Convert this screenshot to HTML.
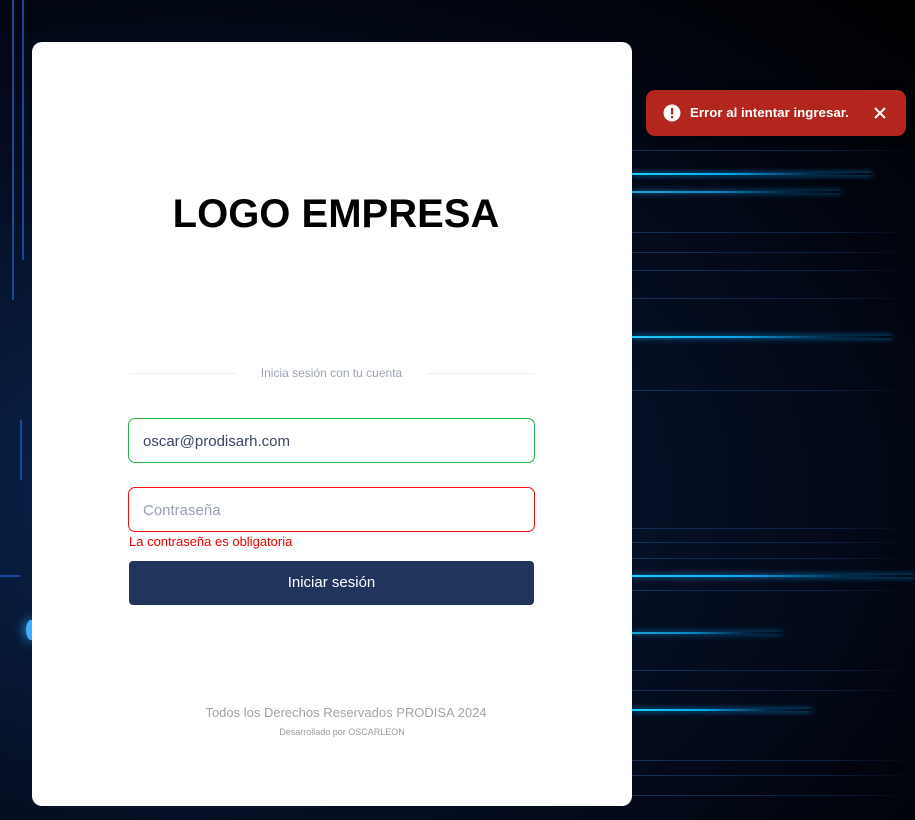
<!DOCTYPE html>
<html><head><meta charset="utf-8"><style>
*{margin:0;padding:0;box-sizing:border-box}
body{width:915px;height:820px;overflow:hidden;position:relative;font-family:"Liberation Sans",sans-serif;background:radial-gradient(ellipse at 20% 60%,#0a2550 0%,#06122a 40%,#020510 75%,#000 100%)}
.ln{position:absolute;left:632px;height:2px;background:linear-gradient(90deg,#1ad0ff,#0aa8ee 40%,rgba(10,120,200,.3) 75%,transparent);box-shadow:0 0 6px #0af}
.dl{position:absolute;left:632px;right:0;height:1px;background:linear-gradient(90deg,#16305a,#0c2040 70%,transparent)}
.cl{position:absolute;border:2px solid #1c57b5;opacity:.8}
.card{position:absolute;left:32px;top:42px;width:600px;height:764px;background:#fff;border-radius:10px}
.logo{position:absolute;top:152px;left:0;width:100%;text-align:center;font-size:40px;line-height:40px;font-weight:bold;color:#000;padding-left:8px}
.div{position:absolute;top:324px;left:97px;width:405px;font-size:12px;color:#9aa3b5;text-align:center}
.div:before,.div:after{content:"";position:absolute;top:7px;width:107px;height:1px;background:#eceef2}
.div:before{left:0}.div:after{right:0}
.inp{position:absolute;left:96px;width:407px;height:45px;border-radius:7px;font-size:15px;padding:14px 14px}
.btn{position:absolute;left:97px;top:519px;width:405px;height:44px;background:#21345c;border-radius:4px;color:#fff;text-align:center;line-height:44px;font-size:15px}
.toast{position:absolute;left:646px;top:90px;width:260px;height:46px;background:#b3261e;border-radius:9px;box-shadow:0 2px 8px rgba(0,0,0,.6);color:#fff;font-size:13.3px;font-weight:bold}
</style></head><body>
<div class="dl" style="top:150px"></div><div class="dl" style="top:232px"></div><div class="dl" style="top:252px"></div><div class="dl" style="top:270px"></div><div class="dl" style="top:298px"></div><div class="dl" style="top:390px"></div><div class="dl" style="top:528px"></div><div class="dl" style="top:542px"></div><div class="dl" style="top:558px"></div><div class="dl" style="top:590px"></div><div class="dl" style="top:670px"></div><div class="dl" style="top:690px"></div><div class="dl" style="top:760px"></div><div class="dl" style="top:775px"></div><div class="dl" style="top:795px"></div>
<div class="ln" style="top:173px;width:240px"></div>
<div class="ln" style="top:191px;width:210px;opacity:.8"></div>
<div class="ln" style="top:336px;width:260px"></div>
<div class="ln" style="top:575px;width:283px"></div>
<div class="ln" style="top:632px;width:150px;opacity:.8"></div>
<div class="ln" style="top:709px;width:180px"></div>
<div class="cl" style="left:12px;top:0;width:2px;height:300px;border-width:0 0 0 2px"></div>
<div class="cl" style="left:22px;top:0;width:2px;height:260px;border-width:0 0 0 2px"></div>
<div class="cl" style="left:20px;top:420px;width:2px;height:60px;border-width:0 0 0 2px"></div>
<div class="cl" style="left:0;top:575px;width:20px;height:2px;border-width:2px 0 0 0"></div>
<div style="position:absolute;left:26px;top:620px;width:10px;height:20px;border-radius:50%;background:#3bb0ff;box-shadow:0 0 12px #3bb0ff"></div>
<div class="card">
<div class="logo">LOGO EMPRESA</div>
<div class="div">Inicia sesión con tu cuenta</div>
<div class="inp" style="top:376px;border:1px solid #22b04b;color:#3a4560">oscar@prodisarh.com</div>
<div class="inp" style="top:445px;border:1px solid #f01010;color:#98a0b3">Contraseña</div>
<div style="position:absolute;left:97px;top:492px;font-size:13px;color:#e00">La contraseña es obligatoria</div>
<div class="btn">Iniciar sesión</div>
<div style="position:absolute;top:663px;left:0;width:600px;text-align:center;padding-left:28px;font-size:13px;color:#a3a3a3">Todos los Derechos Reservados PRODISA 2024</div>
<div style="position:absolute;top:685px;left:0;width:600px;text-align:center;padding-left:20px;font-size:9px;color:#999">Desarrollado por OSCARLEON</div>
</div>
<div class="toast">
<svg style="position:absolute;left:17px;top:14px" width="18" height="18" viewBox="0 0 18 18"><circle cx="9" cy="9" r="8.5" fill="#fff"/><rect x="8" y="4" width="2.2" height="6.5" fill="#b3261e"/><rect x="8" y="12" width="2.2" height="2.2" fill="#b3261e"/></svg>
<span style="position:absolute;left:44px;top:15px">Error al intentar ingresar.</span>
<svg style="position:absolute;left:228px;top:17px" width="12" height="12" viewBox="0 0 12 12"><path d="M1 1L11 11M11 1L1 11" stroke="#fff" stroke-width="2"/></svg>
</div>
</body></html>
